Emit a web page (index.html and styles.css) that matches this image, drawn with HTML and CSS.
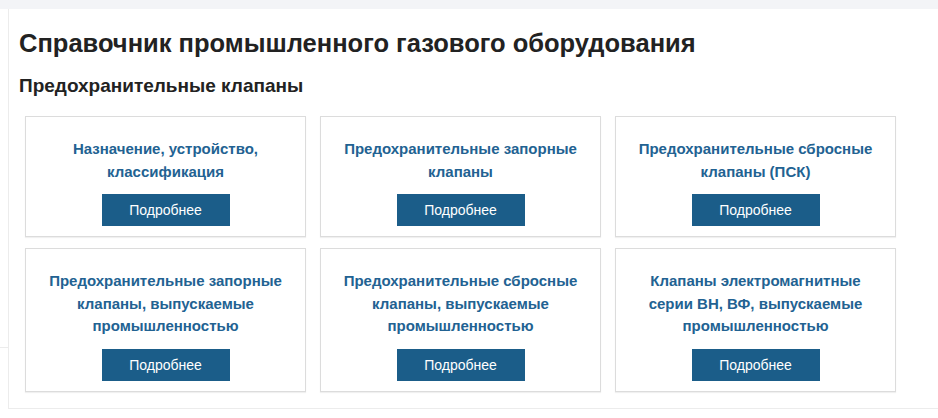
FILE: index.html
```html
<!DOCTYPE html>
<html lang="ru">
<head>
<meta charset="utf-8">
<link rel="stylesheet" href="styles.css">
</head>
<body>
<div class="topbar"></div>
<div class="layout">
  <div class="side"></div>
  <main class="panel">
    <h1 class="title">Справочник промышленного газового оборудования</h1>
    <h2 class="subtitle">Предохранительные клапаны</h2>
    <div class="grid">
      <div class="card">
        <div class="card-title">Назначение, устройство, классификация</div>
        <a class="btn" href="#">Подробнее</a>
      </div>
      <div class="card">
        <div class="card-title">Предохранительные запорные клапаны</div>
        <a class="btn" href="#">Подробнее</a>
      </div>
      <div class="card">
        <div class="card-title">Предохранительные сбросные клапаны (ПСК)</div>
        <a class="btn" href="#">Подробнее</a>
      </div>
      <div class="card">
        <div class="card-title">Предохранительные запорные клапаны, выпускаемые промышленностью</div>
        <a class="btn" href="#">Подробнее</a>
      </div>
      <div class="card">
        <div class="card-title">Предохранительные сбросные клапаны, выпускаемые промышленностью</div>
        <a class="btn" href="#">Подробнее</a>
      </div>
      <div class="card">
        <div class="card-title">Клапаны электромагнитные серии ВН, ВФ, выпускаемые промышленностью</div>
        <a class="btn" href="#">Подробнее</a>
      </div>
    </div>
  </main>
</div>
</body>
</html>
```

FILE: styles.css
```css
* { box-sizing: border-box; }
html, body { margin: 0; padding: 0; }
body {
  background: #ffffff;
  font-family: "Liberation Sans", Arial, sans-serif;
  color: #222;
  width: 938px;
  height: 418px;
  overflow: hidden;
}
.topbar {
  height: 9px;
  background: #f3f4f7;
}
.layout {
  display: flex;
}
.side {
  width: 8px;
  flex: none;
  border-bottom: 1px solid #ececec;
  height: 339px;
}
.panel {
  flex: 1;
  background: #fff;
  border-left: 1px solid #ececec;
  border-bottom: 1px solid #ececec;
  padding: 19px 0 15px 10px;
  height: 400px;
}
.title {
  margin: 0;
  font-size: 25.5px;
  line-height: 30px;
  font-weight: bold;
  color: #222;
}
.subtitle {
  margin: 16px 0 0 0;
  font-size: 19px;
  line-height: 24px;
  font-weight: bold;
  color: #222;
}
.grid {
  margin: 18px 0 0 6px;
  display: grid;
  grid-template-columns: repeat(3, 281px);
  column-gap: 14px;
  row-gap: 11px;
}
.card {
  border: 1px solid #dcdcdc;
  box-shadow: 0 1px 1px rgba(0,0,0,0.06);
  background: #fff;
  padding: 21px 20px 10px;
  display: flex;
  flex-direction: column;
  align-items: center;
  text-align: center;
}
.card-title {
  color: #226292;
  font-size: 15px;
  line-height: 22.5px;
  font-weight: bold;
  flex: 1;
  display: flex;
  align-items: center;
  justify-content: center;
  padding: 0 0 11px;
}
.btn {
  display: flex;
  align-items: center;
  justify-content: center;
  width: 128px;
  height: 32px;
  background: #1b5d89;
  color: #fff;
  font-size: 14px;
  text-decoration: none;
}
```
